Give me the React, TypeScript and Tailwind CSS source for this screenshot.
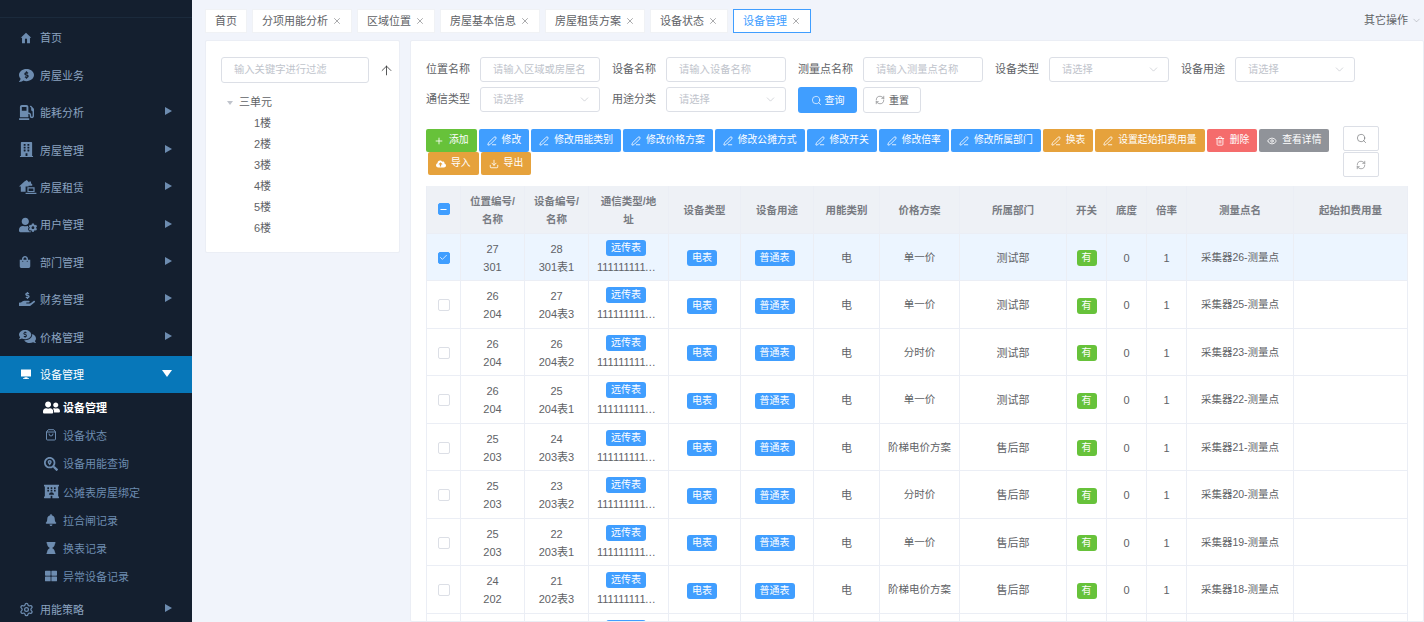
import React from "react";
import { ChevronDown, X, ArrowUp, Search, RefreshCw, Plus, PenLine, Trash2, Eye, Download, Check, Minus, Settings } from "lucide-react";
import {
  FaCommentDollar, FaGasPump, FaBuilding, FaUserCog, FaShoppingBag, FaHandHoldingUsd, FaCommentsDollar,
  FaUserFriends, FaSearchLocation, FaHotel, FaBell, FaHourglass, FaThLarge, FaCloudUploadAlt,
} from "react-icons/fa";
import { FiShoppingBag } from "react-icons/fi";

const font = { fontFamily: '"Liberation Sans", "Noto Sans CJK SC", sans-serif' };

function HomeIcon({ size }: { size: number }) {
  return (
    <svg width={size} height={size} viewBox="0 0 24 24" fill="currentColor">
      <path d="M12 3 3 11.5h2.2V21h5v-6.5a1.8 1.8 0 0 1 3.6 0V21h5v-9.5H21z" />
    </svg>
  );
}

function RentIcon({ size }: { size: number }) {
  return (
    <svg width={size} height={size} viewBox="0 0 30 24" fill="currentColor">
      <path d="M9 3 0 11h3v9h8v-9h5v-1h6V7l-2-1V3h-3v1.5L13 .5z" />
      <path d="M14 12.5h12v8H14zM16 14.500v4h8v-4zM11 21.500h18V23.500H11z" fillRule="evenodd" />
    </svg>
  );
}

function MonitorIcon({ size }: { size: number }) {
  return (
    <svg width={size} height={size} viewBox="0 0 24 24" fill="currentColor">
      <path d="M2 3h20v14H2zM9 18.500h6v2h3V22H6v-1.500h3z" />
    </svg>
  );
}

const menu = [
  { name: "首页", icon: HomeIcon, size: 14, arrow: false },
  { name: "房屋业务", icon: FaCommentDollar, size: 15, arrow: false },
  { name: "能耗分析", icon: FaGasPump, size: 15, arrow: true },
  { name: "房屋管理", icon: FaBuilding, size: 15, arrow: true },
  { name: "房屋租赁", icon: RentIcon, size: 18, arrow: true },
  { name: "用户管理", icon: FaUserCog, size: 18, arrow: true },
  { name: "部门管理", icon: FaShoppingBag, size: 12, arrow: true },
  { name: "财务管理", icon: FaHandHoldingUsd, size: 16, arrow: true },
  { name: "价格管理", icon: FaCommentsDollar, size: 17, arrow: true },
];

const subMenu = [
  { name: "设备管理", icon: FaUserFriends, size: 17, active: true },
  { name: "设备状态", icon: FiShoppingBag, size: 12 },
  { name: "设备用能查询", icon: FaSearchLocation, size: 14 },
  { name: "公摊表房屋绑定", icon: FaHotel, size: 15 },
  { name: "拉合闸记录", icon: FaBell, size: 12 },
  { name: "换表记录", icon: FaHourglass, size: 12 },
  { name: "异常设备记录", icon: FaThLarge, size: 12 },
];

const tabs = [
  { name: "首页" },
  { name: "分项用能分析", close: true },
  { name: "区域位置", close: true },
  { name: "房屋基本信息", close: true },
  { name: "房屋租赁方案", close: true },
  { name: "设备状态", close: true },
  { name: "设备管理", close: true, active: true },
];

const actions = [
  { name: "添加", icon: Plus, color: "bg-[#67c23a]", first: true },
  { name: "修改", icon: PenLine, color: "bg-[#409eff]" },
  { name: "修改用能类别", icon: PenLine, color: "bg-[#409eff]" },
  { name: "修改价格方案", icon: PenLine, color: "bg-[#409eff]" },
  { name: "修改公摊方式", icon: PenLine, color: "bg-[#409eff]" },
  { name: "修改开关", icon: PenLine, color: "bg-[#409eff]" },
  { name: "修改倍率", icon: PenLine, color: "bg-[#409eff]" },
  { name: "修改所属部门", icon: PenLine, color: "bg-[#409eff]" },
  { name: "换表", icon: PenLine, color: "bg-[#e6a23c]" },
  { name: "设置起始扣费用量", icon: PenLine, color: "bg-[#e6a23c]" },
  { name: "删除", icon: Trash2, color: "bg-[#f56c6c]" },
  { name: "查看详情", icon: Eye, color: "bg-[#909399]" },
  { name: "导入", icon: FaCloudUploadAlt, color: "bg-[#e6a23c]" },
  { name: "导出", icon: Download, color: "bg-[#e6a23c]" },
];

const rows = [
  ["27", "301", "28", "301表1", "单一价", "测试部", "采集器26-测量点"],
  ["26", "204", "27", "204表3", "单一价", "测试部", "采集器25-测量点"],
  ["26", "204", "26", "204表2", "分时价", "测试部", "采集器23-测量点"],
  ["26", "204", "25", "204表1", "单一价", "测试部", "采集器22-测量点"],
  ["25", "203", "24", "203表3", "阶梯电价方案", "售后部", "采集器21-测量点"],
  ["25", "203", "23", "203表2", "分时价", "售后部", "采集器20-测量点"],
  ["25", "203", "22", "203表1", "单一价", "售后部", "采集器19-测量点"],
  ["24", "202", "21", "202表3", "阶梯电价方案", "售后部", "采集器18-测量点"],
  ["24", "202", "20", "202表2", "单一价", "售后部", "采集器17-测量点"],
];

const headers = ["位置编号/名称", "设备编号/名称", "通信类型/地址", "设备类型", "设备用途", "用能类别", "价格方案", "所属部门", "开关", "底度", "倍率", "测量点名", "起始扣费用量"];

function Tag({ children, color = "mr-[5px] bg-[#409eff]" }: { children: React.ReactNode; color?: string }) {
  return <span className={`inline-flex h-4 items-center rounded-[3px] px-[5px] text-[10px] leading-none text-white ${color}`}>{children}</span>;
}

function Field({ label, placeholder, select }: { label: string; placeholder: string; select?: boolean }) {
  return (
    <div className="mr-3 flex h-[25px] items-center">
      <span className="mr-[10px] text-[11px] text-[#606266]">{label}</span>
      <div className="flex h-[25px] w-[120px] items-center justify-between rounded-[3px] border border-[#dcdfe6] bg-white pl-3 pr-2 text-[10.3px] text-[#c0c4cc]">
        {placeholder}
        {select && <ChevronDown size={13} strokeWidth={1} className="text-[#b0b4bc]" />}
      </div>
    </div>
  );
}

function Box({ checked, partial }: { checked?: boolean; partial?: boolean }) {
  const on = checked || partial;
  return (
    <span className={`mx-auto flex h-3 w-3 items-center justify-center rounded-[2px] border ${on ? "border-[#409eff] bg-[#409eff]" : "border-[#dcdfe6] bg-white"}`}>
      {checked && <Check size={9} strokeWidth={2} className="text-white" />}
      {partial && <Minus size={9} strokeWidth={3} className="text-white" />}
    </span>
  );
}

export default function App() {
  return (
    <div style={font} className="flex h-[622px] w-[1424px] overflow-hidden bg-[#f1f4fb]">
      <aside className="w-[192px] shrink-0 bg-[#141f2f] text-[11px] text-[#8ba3c0]">
        <div className="mb-[1px] h-[18px] border-b border-[#1b2a3c]" />
        {menu.map((m) => (
          <div key={m.name} className="flex h-[37.4px] items-center pl-[19px] pr-5">
            <span className="flex w-[21px] justify-start text-[#6d8cb0]"><m.icon size={m.size} /></span>
            <span className="pt-[2px]">{m.name}</span>
            {m.arrow && <span className="-mt-[2px] ml-auto h-0 w-0 border-y-[4px] border-l-[7px] border-y-transparent border-l-[#6d8cb0]" />}
          </div>
        ))}
        <div className="flex h-[37.6px] items-center bg-[#0777b9] pl-[19px] pr-5 text-white">
          <span className="flex w-[21px] pl-[1px]"><MonitorIcon size={12} /></span>
          <span className="pt-[2px]">设备管理</span>
          <span className="-mt-[2px] ml-auto h-0 w-0 border-x-[5px] border-t-[7px] border-x-transparent border-t-white" />
        </div>
        {subMenu.map((s) => (
          <div key={s.name} className={`flex h-[28.2px] items-center pl-[42px] ${s.active ? "font-bold text-white" : "text-[#6d8cb0]"}`}>
            <span className="flex w-[21px] justify-center pr-[3px]"><s.icon size={s.size} /></span>
            <span className="pt-[2px]">{s.name}</span>
          </div>
        ))}
        <div className="flex h-[37.4px] items-center pl-[19px] pr-5">
          <span className="flex w-[21px] text-[#6d8cb0]"><Settings size={15} /></span>
          <span className="pt-[2px]">用能策略</span>
          <span className="-mt-[2px] ml-auto h-0 w-0 border-y-[4px] border-l-[7px] border-y-transparent border-l-[#6d8cb0]" />
        </div>
      </aside>

      <main className="min-w-0 flex-1">
        <div className="flex h-[40px] items-start pl-[13px] pt-[9px]">
          {tabs.map((t) => (
            <div
              key={t.name}
              className={`mr-[5px] flex h-[24px] items-center border px-[9px] text-[11px] ${t.active ? "border-[#409eff] bg-white text-[#409eff]" : "border-[#f0f2f5] bg-white text-[#606266]"}`}
            >
              {t.name}
              {t.close && <X size={10} strokeWidth={1.3} className="ml-[4px] text-[#606266]" />}
            </div>
          ))}
          <div className="ml-auto mr-[2px] flex h-[23px] items-center text-[11px] text-[#606266]">
            其它操作
            <ChevronDown size={11} strokeWidth={1} className="ml-[3px] text-[#909399]" />
          </div>
        </div>

        <div className="flex items-start">
          <div className="ml-[13px] h-[213px] w-[195px] shrink-0 rounded-[2px] border border-[#ebeef5] bg-white pl-[15px] pt-4">
            <div className="flex items-center">
              <div className="flex h-[26px] w-[148px] items-center rounded-[3px] border border-[#dcdfe6] pl-3 text-[10.300px] text-[#c0c4cc]">输入关键字进行过滤</div>
              <ArrowUp size={15} strokeWidth={1.3} className="ml-[10px] text-[#303133]" />
            </div>
            <div className="mt-[9px] text-[11px] text-[#606266]">
              <div className="flex h-[21px] items-center pl-[6px]">
                <span className="mr-[6px] h-0 w-0 border-x-[3px] border-t-[4px] border-x-transparent border-t-[#c0c4cc]" />
                三单元
              </div>
              {["1楼", "2楼", "3楼", "4楼", "5楼", "6楼"].map((f) => (
                <div key={f} className="flex h-[21px] items-center pl-[33px]">{f}</div>
              ))}
            </div>
          </div>

          <div className="ml-[10px] h-[582px] min-w-0 flex-1 overflow-hidden rounded-[2px] border border-[#ebeef5] bg-white pl-[15px] pr-4 pt-4">
            <div className="flex flex-wrap gap-y-[5px]">
              <Field label="位置名称" placeholder="请输入区域或房屋名" />
              <Field label="设备名称" placeholder="请输入设备名称" />
              <Field label="测量点名称" placeholder="请输入测量点名称" />
              <Field label="设备类型" placeholder="请选择" select />
              <Field label="设备用途" placeholder="请选择" select />
              <Field label="通信类型" placeholder="请选择" select />
              <Field label="用途分类" placeholder="请选择" select />
              <button className="flex h-[26px] w-[59px] items-center justify-center gap-[3px] rounded-[3px] bg-[#409eff] text-[10px] text-white">
                <Search size={11} strokeWidth={1.5} />查询
              </button>
              <button className="ml-[6px] flex h-[26px] w-[58px] items-center justify-center gap-[4px] rounded-[3px] border border-[#dcdfe6] bg-white text-[10px] text-[#606266]">
                <RefreshCw size={10} strokeWidth={1.3} />重置
              </button>
            </div>

            <div className="mt-[13px] flex items-start">
              <div className="mt-[3px] flex w-[910px] flex-wrap gap-y-0">
                {actions.map((a) => (
                  <button
                    key={a.name}
                    className={`flex h-[23px] items-center gap-[5px] rounded-[2px] px-2 text-[9.800px] text-white ${a.first ? "" : "ml-[2px]"} ${a.color}`}
                  >
                    <a.icon size={10} />
                    {a.name}
                  </button>
                ))}
              </div>
              <div className="ml-[7px] flex flex-col gap-px">
                <button className="flex h-[25px] w-[36px] items-center justify-center rounded-[2px] border border-[#dcdfe6] text-[#606266]"><Search size={11} strokeWidth={1.3} /></button>
                <button className="flex h-[25px] w-[36px] items-center justify-center rounded-[2px] border border-[#dcdfe6] text-[#606266]"><RefreshCw size={10} strokeWidth={1.3} /></button>
              </div>
            </div>

            <table className="mt-[9px] w-[981px] table-fixed border-collapse text-center text-[11px] text-[#606266]">
              <colgroup>
                <col className="w-[34px]" />
                <col className="w-[64px]" />
                <col className="w-[64px]" />
                <col className="w-[80px]" />
                <col className="w-[72px]" />
                <col className="w-[73px]" />
                <col className="w-[66px]" />
                <col className="w-[80px]" />
                <col className="w-[107px]" />
                <col className="w-[40px]" />
                <col className="w-[40px]" />
                <col className="w-[40px]" />
                <col className="w-[107px]" />
                <col className="w-[114px]" />
              </colgroup>
              <thead>
                <tr className="h-[47px] bg-[#eef1f6]">
                  <th className="border-x border-[#ebeef5]"><Box partial /></th>
                  {headers.map((h) => (
                    <th key={h} className="border-x border-[#ebeef5] px-[8px] pt-[2px] text-[10.5px] font-bold leading-[18px] text-[#787b82]">{h}</th>
                  ))}
                </tr>
              </thead>
              <tbody>
                {rows.map((r, i) => (
                  <tr key={i} className={`h-[47.5px] ${i === 0 ? "bg-[#ecf5ff]" : ""}`}>
                    <td className="border border-[#ebeef5] pt-[2px]"><Box checked={i === 0} /></td>
                    <td className="border border-[#ebeef5] pt-[2px] leading-[18px]">{r[0]}<br />{r[1]}</td>
                    <td className="border border-[#ebeef5] pt-[2px] leading-[18px]">{r[2]}<br />{r[3]}</td>
                    <td className="border border-[#ebeef5] leading-[18px]">
                      <div className="flex flex-col items-center pt-[2px]">
                        <Tag>远传表</Tag>
                        <span className="mt-[2px] w-full truncate pl-[8px] pr-[12px] text-[11px]">1111111111111</span>
                      </div>
                    </td>
                    <td className="border border-[#ebeef5] pt-[2px]"><Tag>电表</Tag></td>
                    <td className="border border-[#ebeef5] pt-[2px]"><Tag>普通表</Tag></td>
                    <td className="border border-[#ebeef5] pt-[2px]">电</td>
                    <td className="border border-[#ebeef5] pt-[2px] text-[10.5px]">{r[4]}</td>
                    <td className="border border-[#ebeef5] pt-[2px]">{r[5]}</td>
                    <td className="border border-[#ebeef5] pt-[2px]"><Tag color="bg-[#67c23a]">有</Tag></td>
                    <td className="border border-[#ebeef5] pt-[2px]">0</td>
                    <td className="border border-[#ebeef5] pt-[2px]">1</td>
                    <td className="border border-[#ebeef5] pt-[2px] text-[10.5px]">{r[6]}</td>
                    <td className="border border-[#ebeef5]" />
                  </tr>
                ))}
              </tbody>
            </table>
          </div>
        </div>
      </main>
    </div>
  );
}
